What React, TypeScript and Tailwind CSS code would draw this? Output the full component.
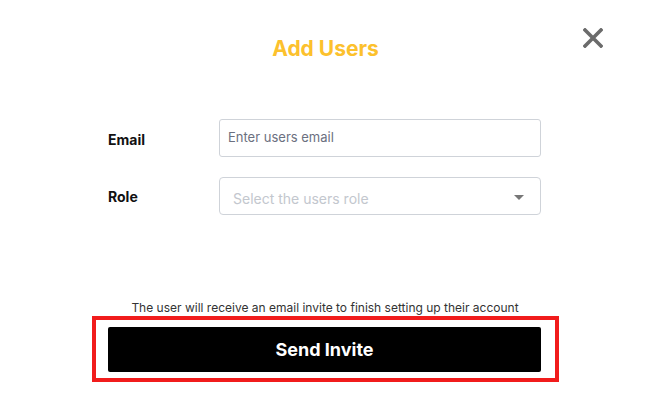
import React from 'react';

export default function App() {
  return (
    <main
      className="relative h-[413px] w-[651px] overflow-hidden bg-white"
      style={{ fontFamily: 'Inter, "Liberation Sans", sans-serif' }}
    >
      {/* close button */}
      <button className="absolute right-[48px] top-[28px] flex h-[20px] w-[20px] items-center justify-center">
        <svg width="20" height="20" viewBox="0 0 20 20">
          <path d="M2 2 L18 18 M18 2 L2 18" stroke="#6b6b6b" strokeWidth="3.6" strokeLinecap="square" />
        </svg>
      </button>

      <div className="flex flex-col">
        {/* title */}
        <h1 className="mt-[35px] self-center text-[21px] font-bold leading-[28px] text-[#fcc12d]">Add Users</h1>

        {/* form */}
        <div className="ml-[108px] mt-[56px] flex w-[433px] flex-col gap-[20px]">
          <div className="flex items-center">
            <label className="w-[111px] pt-[2px] text-[14px] font-bold text-[#111]">Email</label>
            <div className="flex h-[38px] flex-1 items-center rounded-[3px] border border-[#cfd3d9] px-[8px]">
              <span className="text-[13px] text-[#6b7080]">Enter users email</span>
            </div>
          </div>
          <div className="flex items-center">
            <label className="w-[111px] text-[14px] font-bold text-[#111]">Role</label>
            <div className="flex h-[38px] flex-1 items-center justify-between rounded-[4px] border border-[#cfd3d9] pl-[13px] pr-[16px]">
              <span className="pt-[4px] text-[14px] text-[#c3c7ce]">Select the users role</span>
              <svg width="10" height="6" viewBox="0 0 10 6" className="mt-[3px]">
                <path d="M0 0 L10 0 L5 5 Z" fill="#777" />
              </svg>
            </div>
          </div>
        </div>

        {/* helper + action */}
        <p className="ml-[-1px] mt-[86px] self-center text-[12px] leading-[13px] text-[#333]">
          The user will receive an email invite to finish setting up their account
        </p>
        <div className="ml-[92px] mt-[2px] self-start border-4 border-[#f11c1c] pb-[6px] pl-[12px] pr-[14px] pt-[7px]">
          <button className="flex h-[45px] w-[433px] items-center justify-center rounded-[2px] bg-black text-[18px] font-bold text-white">
            Send Invite
          </button>
        </div>
      </div>
    </main>
  );
}
